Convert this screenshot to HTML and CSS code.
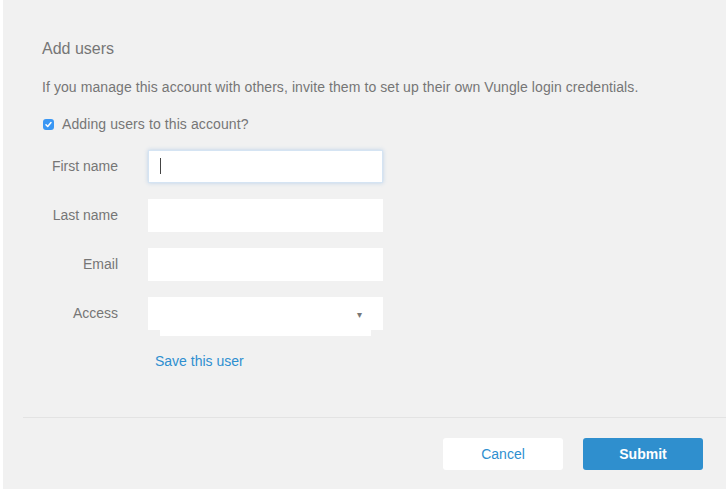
FILE: index.html
```html
<!DOCTYPE html>
<html lang="en">
<head>
    <meta charset="UTF-8">
    <title>Add users</title>
    <link rel="stylesheet" href="styles.css">
</head>
<body>
    <div class="panel">
        <div class="content">
            <h2 class="title">Add users</h2>
            <p class="intro">If you manage this account with others, invite them to set up their own Vungle login credentials.</p>
            <label class="check-row">
                <span class="checkbox">
                    <svg width="11" height="11" viewBox="0 0 11 11"><path d="M3 5.8 L4.7 7.5 L8 3.6" fill="none" stroke="#fff" stroke-width="1.5" stroke-linecap="round" stroke-linejoin="round"/></svg>
                </span>
                Adding users to this account?
            </label>

            <div class="form">
                <label class="field-label">First name</label>
                <div class="input-wrap">
                    <input class="field focused" type="text">
                    <span class="caret"></span>
                </div>

                <label class="field-label">Last name</label>
                <input class="field" type="text">

                <label class="field-label">Email</label>
                <input class="field" type="text">

                <label class="field-label">Access</label>
                <div class="select">
                    <span class="arrow">&#9662;</span>
                    <span class="select-menu"></span>
                </div>

                <span></span>
                <a class="save-link" href="#">Save this user</a>
            </div>
        </div>

        <div class="footer">
            <button class="btn btn-cancel">Cancel</button>
            <button class="btn btn-submit">Submit</button>
        </div>
    </div>
</body>
</html>
```

FILE: styles.css
```css
html, body {
    margin: 0;
    height: 100%;
    background-color: #fff;
}
body {
    font-family: "Liberation Sans", Arial, sans-serif;
    font-size: 14px;
    color: #767676;
    padding-left: 3px;
}
.panel {
    background-color: #f1f1f1;
    height: 489px;
    box-sizing: border-box;
}
.content {
    padding: 39px 0 0 39px;
}
.title {
    margin: 0;
    font-size: 16px;
    font-weight: normal;
    line-height: 20px;
    color: #767676;
}
.intro {
    margin: 19px 0 0;
    line-height: 18px;
    letter-spacing: 0.08px;
}
.check-row {
    display: flex;
    align-items: center;
    gap: 8px;
    margin-top: 19px;
    margin-left: 1px;
    line-height: 18px;
    letter-spacing: 0.1px;
}
.checkbox {
    width: 11px;
    height: 11px;
    border-radius: 3px;
    background-color: #3a97f4;
    display: flex;
}
.form {
    display: grid;
    grid-template-columns: 76px 235px;
    column-gap: 30px;
    row-gap: 16px;
    align-items: center;
    margin-top: 17px;
}
.field-label {
    text-align: right;
    margin-top: -2px;
}
.input-wrap {
    position: relative;
    height: 33px;
}
.field {
    display: block;
    width: 235px;
    height: 33px;
    box-sizing: border-box;
    border: none;
    background-color: #fff;
    padding: 0 12px;
    font: inherit;
    outline: none;
}
.field.focused {
    border: 1px solid #d5e4f3;
    box-shadow: 0 0 4px rgba(120, 170, 225, 0.45);
}
.caret {
    position: absolute;
    left: 12px;
    top: 8px;
    width: 1px;
    height: 16px;
    background-color: #444;
}
.select {
    position: relative;
    height: 33px;
    background-color: #fff;
}
.arrow {
    position: absolute;
    right: 21px;
    top: 12px;
    font-size: 10px;
    color: #777;
}
.select-menu {
    position: absolute;
    left: 12px;
    right: 12px;
    top: 33px;
    height: 6px;
    background-color: #fff;
}
.save-link {
    color: #2e8fd0;
    text-decoration: none;
    padding-left: 7px;
    margin-top: 6px;
    line-height: 18px;
}
.footer {
    margin: 47px 0 0 20px;
    border-top: 1px solid #e3e3e3;
    padding: 20px 23px 0 0;
    display: flex;
    justify-content: flex-end;
    gap: 20px;
}
.btn {
    width: 120px;
    height: 32px;
    border: none;
    border-radius: 3px;
    font-family: "Liberation Sans", Arial, sans-serif;
    font-size: 14px;
    cursor: pointer;
}
.btn-cancel {
    background-color: #fff;
    color: #2e8fd0;
}
.btn-submit {
    background-color: #2f8fce;
    color: #fff;
    font-weight: bold;
}
```
